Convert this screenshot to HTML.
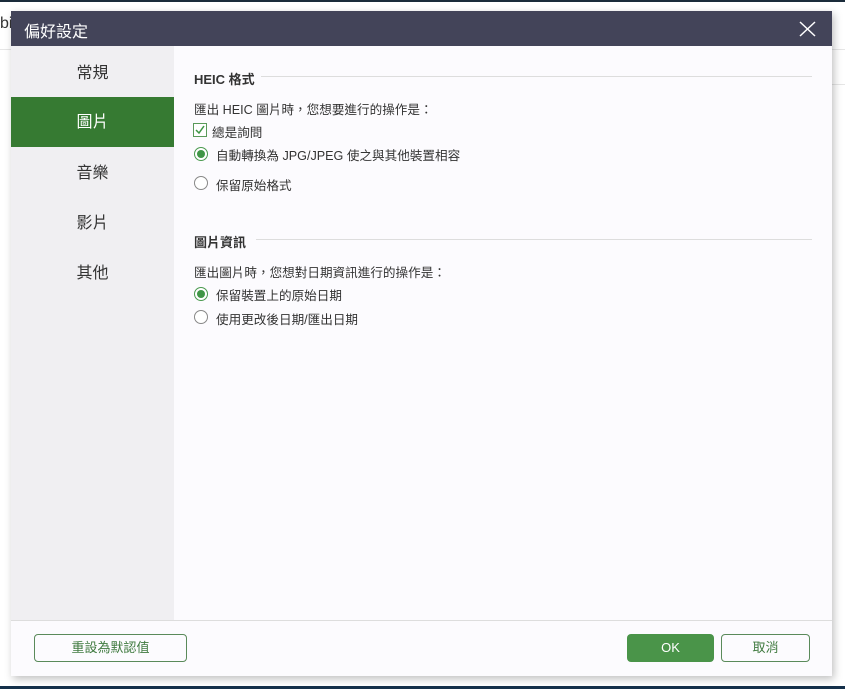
<!DOCTYPE html>
<html><head><meta charset="utf-8"><style>
body{margin:0;width:845px;height:689px;background:#fff;position:relative;overflow:hidden;font-family:"Liberation Sans","Noto Sans CJK TC",sans-serif;}
.a{position:absolute}
.t{font-size:12.6px;color:#333;}
.rad{position:absolute;width:12px;height:12px;border:1px solid #888;border-radius:50%;background:#fff}
.rad.on{border-color:#4a9a4f}
.rad.on::after{content:"";position:absolute;left:2px;top:2px;width:8px;height:8px;border-radius:50%;background:#3f9646}
.nav{position:absolute;left:11px;width:163px;height:50px;line-height:50px;text-align:center;font-size:16px;color:#333}
</style></head><body>
<div class="a" style="left:0;top:0;width:845px;height:2px;background:#1a2b3a"></div>
<div class="a" style="left:0;top:15px;font-size:16px;color:#333">bi</div>
<div class="a" style="left:0;top:49px;width:845px;height:1px;background:#e6e6e6"></div>
<div class="a" style="left:832px;top:84px;width:13px;height:1px;background:#e6e6e6"></div>
<div class="a" style="left:0;top:686px;width:845px;height:3px;background:#14304a"></div>
<div class="a" style="left:11px;top:11px;width:821px;height:665px;background:#fcfbfe;box-shadow:2px 3px 8px rgba(0,0,0,0.25)"></div>
<div class="a" style="left:11px;top:11px;width:821px;height:35px;background:#434459"></div>
<div class="a" style="left:24px;top:18px;font-size:16px;color:#fff">偏好設定</div>
<svg class="a" style="left:799px;top:21px" width="18" height="16"><path d="M1 1L16 15M16 1L1 15" stroke="#fff" stroke-width="1.5"/></svg>
<div class="a" style="left:11px;top:46px;width:163px;height:574px;background:#f0eff2"></div>
<div class="nav" style="top:49px">常規</div>
<div class="nav" style="top:97px;background:#367a32;color:#fff;line-height:52px">圖片</div>
<div class="nav" style="top:149px">音樂</div>
<div class="nav" style="top:199px">影片</div>
<div class="nav" style="top:249px">其他</div>
<div class="a" style="left:194px;top:69px;font-size:13px;font-weight:bold;color:#333">HEIC 格式</div>
<div class="a" style="left:261px;top:76px;width:551px;height:1px;background:#ddd"></div>
<div class="a t" style="left:194px;top:99px">匯出 HEIC 圖片時，您想要進行的操作是：</div>
<div class="a" style="left:193px;top:123px;width:12px;height:12px;border:1px solid #5a9a5a;background:#fff"></div>
<svg class="a" style="left:195px;top:125px" width="10" height="10"><path d="M1 5L4 8L9 1" stroke="#3f9646" stroke-width="1.5" fill="none"/></svg>
<div class="a t" style="left:212px;top:122px">總是詢問</div>
<div class="rad on" style="left:194px;top:147px"></div>
<div class="a t" style="left:216px;top:145px">自動轉換為 JPG/JPEG 使之與其他裝置相容</div>
<div class="rad" style="left:194px;top:176px"></div>
<div class="a t" style="left:216px;top:175px">保留原始格式</div>
<div class="a" style="left:194px;top:232px;font-size:13px;font-weight:bold;color:#333">圖片資訊</div>
<div class="a" style="left:256px;top:239px;width:556px;height:1px;background:#ddd"></div>
<div class="a t" style="left:194px;top:262px">匯出圖片時，您想對日期資訊進行的操作是：</div>
<div class="rad on" style="left:194px;top:287px"></div>
<div class="a t" style="left:216px;top:285px">保留裝置上的原始日期</div>
<div class="rad" style="left:194px;top:310px"></div>
<div class="a t" style="left:216px;top:309px">使用更改後日期/匯出日期</div>
<div class="a" style="left:11px;top:620px;width:821px;height:1px;background:#ddd"></div>
<div class="a" style="left:34px;top:634px;width:151px;height:26px;border:1px solid #5a8a5a;border-radius:4px;text-align:center;line-height:26px;font-size:13px;color:#3f7a3f">重設為默認值</div>
<div class="a" style="left:627px;top:634px;width:87px;height:28px;background:#4a9449;border-radius:4px;text-align:center;line-height:28px;font-size:13px;color:#fff">OK</div>
<div class="a" style="left:721px;top:634px;width:87px;height:26px;border:1px solid #5a8a5a;border-radius:4px;text-align:center;line-height:26px;font-size:13px;color:#3f7a3f">取消</div>
</body></html>
